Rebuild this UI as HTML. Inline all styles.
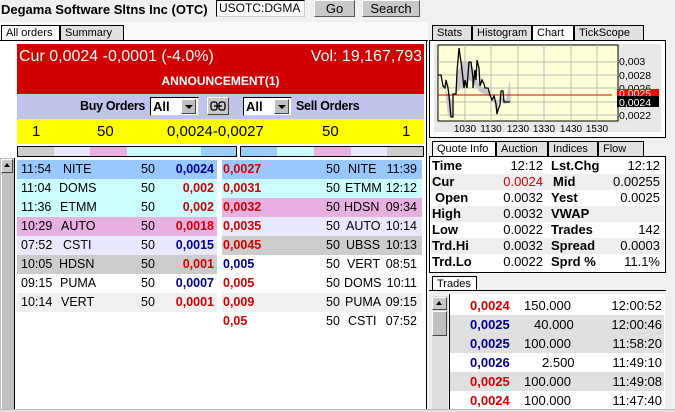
<!DOCTYPE html>
<html><head><meta charset="utf-8"><style>
*{margin:0;padding:0;box-sizing:border-box}
body{width:675px;height:412px;overflow:hidden;background:#f0f0f0;font-family:"Liberation Sans",sans-serif;font-size:12px;position:relative;color:#000}
.a{position:absolute}
.b{font-weight:bold}
.tab{position:absolute;height:15px;border:1px solid #000;border-bottom:none;background:#e0e0e0;font-size:11px;padding-left:4px;line-height:14px;white-space:nowrap;overflow:hidden}
.btn{position:absolute;background:#c8c8c8;border:1px solid #fff;border-right-color:#555;border-bottom-color:#555;text-align:center;font-size:13px;line-height:15px}
.row{position:absolute;height:19px;line-height:19px;font-size:12.5px}
.row span{position:absolute}
.bl{color:#000090;font-weight:bold}
.rd{color:#d00000;font-weight:bold}
.q{position:absolute;left:431px;width:233px;height:16px;line-height:16px;font-size:13px}
.q span{position:absolute}
.t{position:absolute;left:450px;width:214px;height:19px;line-height:19px;font-size:13px}
.t span{position:absolute}
</style></head><body>
<div class="a" style="left:0;top:22px;width:428px;height:390px;background:#fafafa"></div>
<div class="a b" style="left:1px;top:1px;font-size:13px;line-height:17px">Degama Software Sltns Inc (OTC)</div>
<div class="a" style="left:216px;top:0;width:89px;height:17px;background:#fff;border:1px solid #000;border-right-color:#ccc;border-bottom-color:#ccc;font-size:12px;line-height:15px;padding-left:2px">USOTC:DGMA</div>
<div class="btn" style="left:314px;top:0;width:41px;height:17px">Go</div>
<div class="btn" style="left:362px;top:0;width:58px;height:17px">Search</div>

<div class="tab" style="left:1px;top:25px;width:59px;background:#fff">All orders</div>
<div class="tab" style="left:60px;top:25px;width:64px">Summary</div>
<div class="a" style="left:0;top:40px;width:428px;height:1px;background:#000"></div>
<div class="a" style="left:426px;top:40px;width:1px;height:372px;background:#000"></div>
<div class="a" style="left:0;top:41px;width:426px;height:370px;background:#fff"></div>
<div class="a" style="left:14px;top:158px;width:1px;height:254px;background:#000"></div>
<div class="a" style="left:0;top:158px;width:14px;height:254px;background:#c0c0c0"></div>
<div class="a" style="left:1px;top:159px;width:12px;height:14px;background:#c8c8c8;border:1px solid #fff;border-right-color:#444;border-bottom-color:#444"></div>
<div class="a" style="left:4px;top:163px;width:0;height:0;border-left:3px solid transparent;border-right:3px solid transparent;border-bottom:4px solid #000"></div>
<div class="a" style="left:1px;top:175px;width:12px;height:236px;background:#c0c0c0;border-left:1px solid #fff"></div>

<div class="a" style="left:17px;top:44px;width:407px;height:50px;background:#d00000;color:#fff"></div>
<div class="a" style="left:19px;top:46px;color:#fff;font-size:16px;line-height:22px">Cur 0,0024 -0,0001 (-4.0%)</div>
<div class="a" style="left:300px;top:46px;width:122px;text-align:right;color:#fff;font-size:16px;line-height:22px">Vol: 19,167,793</div>
<div class="a b" style="left:17px;top:73px;width:407px;text-align:center;color:#fff;font-size:12px;line-height:16px">ANNOUNCEMENT(1)</div>
<div class="a" style="left:17px;top:94px;width:407px;height:25px;background:#c0c4ec"></div>
<div class="a b" style="left:80px;top:98px;font-size:12.5px;line-height:17px;letter-spacing:-0.3px">Buy Orders</div>
<div class="a b" style="left:150px;top:97px;width:49px;height:19px;background:#fff;border:1px solid #000;border-right-color:#ccc;border-bottom-color:#ccc;font-size:13px;line-height:17px;padding-left:2px">All</div>
<div class="a" style="left:181px;top:99px;width:15px;height:15px;background:#c0c0c0;border:1px solid #fff;border-right-color:#444;border-bottom-color:#444"></div>
<div class="a" style="left:185px;top:105px;border-left:4px solid transparent;border-right:4px solid transparent;border-top:4px solid #000"></div>
<div class="a" style="left:207px;top:97px;width:22px;height:18px;background:#c8c8c8;border:1px solid #fff;border-right-color:#444;border-bottom-color:#444"></div>
<svg class="a" style="left:210px;top:101px" width="16" height="10" viewBox="0 0 16 10"><rect x="1" y="1" width="6" height="8" rx="2" fill="none" stroke="#000" stroke-width="1.3"/><rect x="9" y="1" width="6" height="8" rx="2" fill="none" stroke="#000" stroke-width="1.3"/><line x1="4" y1="5" x2="12" y2="5" stroke="#000" stroke-width="1.3"/></svg>
<div class="a b" style="left:243px;top:97px;width:49px;height:19px;background:#fff;border:1px solid #000;border-right-color:#ccc;border-bottom-color:#ccc;font-size:13px;line-height:17px;padding-left:2px">All</div>
<div class="a" style="left:274px;top:99px;width:15px;height:15px;background:#c0c0c0;border:1px solid #fff;border-right-color:#444;border-bottom-color:#444"></div>
<div class="a" style="left:278px;top:105px;border-left:4px solid transparent;border-right:4px solid transparent;border-top:4px solid #000"></div>
<div class="a b" style="left:296px;top:98px;font-size:12.5px;line-height:17px;letter-spacing:-0.3px">Sell Orders</div>
<div class="a" style="left:17px;top:119px;width:407px;height:25px;background:#ffff00;font-size:15px;line-height:25px">
<span class="a" style="left:15px">1</span><span class="a" style="left:80px">50</span><span class="a" style="left:150px">0,0024-0,0027</span><span class="a" style="left:305px">50</span><span class="a" style="left:385px">1</span></div>
<div class="a" style="left:17px;top:146px;width:220px;height:11px;border:1px solid #000;background:linear-gradient(90deg,#ccc 0 36px,#e8e8ff 36px 72px,#e8b0e0 72px 109px,#ccffff 109px 183px,#99ccff 183px)"></div>
<div class="a" style="left:240px;top:146px;width:184px;height:11px;border:1px solid #000;background:linear-gradient(90deg,#99ccff 0 36px,#ccffff 36px 73px,#e8b0e0 73px 110px,#e8e8ff 110px 146px,#ccc 146px)"></div>

<div class="row" style="left:17px;top:160px;width:200px;background:#99c8ff"><span style="left:4px">11:54</span><span style="left:46px">NITE</span><span style="left:124px">50</span><span class="bl" style="right:3px">0,0024</span></div>
<div class="row" style="left:17px;top:179px;width:200px;background:#ccffff"><span style="left:4px">11:04</span><span style="left:42px">DOMS</span><span style="left:124px">50</span><span class="rd" style="right:3px">0,002</span></div>
<div class="row" style="left:17px;top:198px;width:200px;background:#ccffff"><span style="left:4px">11:36</span><span style="left:43px">ETMM</span><span style="left:124px">50</span><span class="rd" style="right:3px">0,002</span></div>
<div class="row" style="left:17px;top:217px;width:200px;background:#e8b0e0"><span style="left:4px">10:29</span><span style="left:44px">AUTO</span><span style="left:124px">50</span><span class="rd" style="right:3px">0,0018</span></div>
<div class="row" style="left:17px;top:236px;width:200px;background:#e8e8ff"><span style="left:4px">07:52</span><span style="left:46px">CSTI</span><span style="left:124px">50</span><span class="bl" style="right:3px">0,0015</span></div>
<div class="row" style="left:17px;top:255px;width:200px;background:#cccccc"><span style="left:4px">10:05</span><span style="left:42px">HDSN</span><span style="left:124px">50</span><span class="rd" style="right:3px">0,001</span></div>
<div class="row" style="left:17px;top:274px;width:200px;background:#fff"><span style="left:4px">09:15</span><span style="left:43px">PUMA</span><span style="left:124px">50</span><span class="bl" style="right:3px">0,0007</span></div>
<div class="row" style="left:17px;top:293px;width:200px;background:#f0f0f0"><span style="left:4px">10:14</span><span style="left:44px">VERT</span><span style="left:124px">50</span><span class="rd" style="right:3px">0,0001</span></div>

<div class="row" style="left:222px;top:160px;width:200px;background:#99c8ff"><span class="rd" style="left:1px">0,0027</span><span style="left:104px">50</span><span style="left:126px">NITE</span><span style="right:5px">11:39</span></div>
<div class="row" style="left:222px;top:179px;width:200px;background:#ccffff"><span class="rd" style="left:1px">0,0031</span><span style="left:104px">50</span><span style="left:123px">ETMM</span><span style="right:5px">12:12</span></div>
<div class="row" style="left:222px;top:198px;width:200px;background:#e8b0e0"><span class="rd" style="left:1px">0,0032</span><span style="left:104px">50</span><span style="left:122px">HDSN</span><span style="right:5px">09:34</span></div>
<div class="row" style="left:222px;top:217px;width:200px;background:#e8e8ff"><span class="rd" style="left:1px">0,0035</span><span style="left:104px">50</span><span style="left:124px">AUTO</span><span style="right:5px">10:14</span></div>
<div class="row" style="left:222px;top:236px;width:200px;background:#cccccc"><span class="rd" style="left:1px">0,0045</span><span style="left:104px">50</span><span style="left:124px">UBSS</span><span style="right:5px">10:13</span></div>
<div class="row" style="left:222px;top:255px;width:200px;background:#fff"><span class="bl" style="left:1px">0,005</span><span style="left:104px">50</span><span style="left:125px">VERT</span><span style="right:5px">08:51</span></div>
<div class="row" style="left:222px;top:274px;width:200px;background:#fff"><span class="rd" style="left:1px">0,005</span><span style="left:104px">50</span><span style="left:122px">DOMS</span><span style="right:5px">10:11</span></div>
<div class="row" style="left:222px;top:293px;width:200px;background:#f0f0f0"><span class="rd" style="left:1px">0,009</span><span style="left:104px">50</span><span style="left:123px">PUMA</span><span style="right:5px">09:15</span></div>
<div class="row" style="left:222px;top:312px;width:200px;background:#fff"><span class="rd" style="left:1px">0,05</span><span style="left:104px">50</span><span style="left:126px">CSTI</span><span style="right:5px">07:52</span></div>

<!-- right panel -->
<div class="tab" style="left:432px;top:25px;width:40px">Stats</div>
<div class="tab" style="left:472px;top:25px;width:60px">Histogram</div>
<div class="tab" style="left:532px;top:25px;width:42px;background:#fff">Chart</div>
<div class="tab" style="left:574px;top:25px;width:70px">TickScope</div>
<div class="a" style="left:429px;top:40px;width:237px;height:98px;border:1px solid #000;background:#fff"></div>
<div class="a" style="left:434px;top:44px;width:227px;height:88px;background:#e8e8e8"></div>
<svg class="a" style="left:0;top:0" width="675" height="140" viewBox="0 0 675 140">
<rect x="438" y="45" width="180" height="76" fill="#ffffd8" stroke="#000" stroke-width="1"/>
<g stroke="#bbb" stroke-width="1">
<line x1="465" y1="45" x2="465" y2="121"/><line x1="491" y1="45" x2="491" y2="121"/><line x1="518" y1="45" x2="518" y2="121"/><line x1="544" y1="45" x2="544" y2="121"/><line x1="571" y1="45" x2="571" y2="121"/><line x1="597" y1="45" x2="597" y2="121"/>
<line x1="438" y1="62" x2="618" y2="62"/><line x1="438" y1="75" x2="618" y2="75"/><line x1="438" y1="88" x2="618" y2="88"/><line x1="438" y1="102" x2="618" y2="102"/><line x1="438" y1="115" x2="618" y2="115"/>
</g>
<path d="M457 72 L464 60 L470 62 L474 70 L480 86 L488 90 L494 102 L497 116 L499 96 L506 100 L510 80 L511 102 L504 104 L498 100 L492 98 L480 92 L470 80 L462 88 L456 92 Z M445 90 L452 100 L452 118 L448 116 Z" fill="#c8c8c8"/>
<line x1="438" y1="95" x2="612" y2="95" stroke="#d00" stroke-width="1"/>
<polyline fill="none" stroke="#000" stroke-width="1.3" points="438,75 441,75 443,86 445,88 446,80 448,88 449,96 451,117 453,117 453,94 456,94 457,72 458,60 459,48 461,62 462,70 464,88 465,80 467,88 469,62 471,62 473,78 473,88 475,70 476,80 477,60 479,68 480,86 482,80 484,84 485,88 488,88 490,95 492,100 494,96 496,104 497,114 498,110 500,105 501,91 503,91 504,102 510,102"/>
<g font-family="Liberation Sans" font-size="10.5" fill="#000">
<text x="619" y="65">0,003</text><text x="619" y="79">0,0028</text><text x="619" y="92">0,0026</text><text x="619" y="119">0,0022</text>
</g>
<g font-family="Liberation Sans" font-size="10" fill="#000" text-anchor="middle">
<text x="465" y="132">1030</text><text x="491" y="132">1130</text><text x="518" y="132">1230</text><text x="544" y="132">1330</text><text x="571" y="132">1430</text><text x="597" y="132">1530</text>
</g>
<rect x="617" y="89" width="42" height="8" fill="#ff0000"/>
<text x="619" y="97" font-family="Liberation Sans" font-size="10.5" fill="#fff">0,0025</text>
<rect x="617" y="96" width="42" height="11" fill="#000"/>
<text x="619" y="106" font-family="Liberation Sans" font-size="10.5" fill="#fff">0,0024</text>
</svg>

<div class="tab" style="left:432px;top:141px;width:64px;background:#fff">Quote Info</div>
<div class="tab" style="left:496px;top:141px;width:52px">Auction</div>
<div class="tab" style="left:548px;top:141px;width:50px">Indices</div>
<div class="tab" style="left:598px;top:141px;width:46px">Flow</div>
<div class="a" style="left:429px;top:156px;width:237px;height:117px;border:1px solid #000;background:#fff"></div>
<div class="q" style="top:158px"><span class="b" style="left:1px">Time</span><span style="right:121px">12:12</span><span class="b" style="left:120px">Lst.Chg</span><span style="right:4px">12:12</span></div>
<div class="q" style="top:174px;background:#eee"><span class="b" style="left:1px">Cur</span><span class="rd" style="right:121px;font-weight:normal">0.0024</span><span class="b" style="left:122px">Mid</span><span style="right:4px">0.00255</span></div>
<div class="q" style="top:190px"><span class="b" style="left:4px">Open</span><span style="right:121px">0.0032</span><span class="b" style="left:120px">Yest</span><span style="right:4px">0.0025</span></div>
<div class="q" style="top:206px;background:#eee"><span class="b" style="left:1px">High</span><span style="right:121px">0.0032</span><span class="b" style="left:120px">VWAP</span></div>
<div class="q" style="top:222px"><span class="b" style="left:1px">Low</span><span style="right:121px">0.0022</span><span class="b" style="left:120px">Trades</span><span style="right:4px">142</span></div>
<div class="q" style="top:238px;background:#eee"><span class="b" style="left:1px">Trd.Hi</span><span style="right:121px">0.0032</span><span class="b" style="left:120px">Spread</span><span style="right:4px">0.0003</span></div>
<div class="q" style="top:254px"><span class="b" style="left:1px">Trd.Lo</span><span style="right:121px">0.0022</span><span class="b" style="left:120px">Sprd %</span><span style="right:4px">11.1%</span></div>

<div class="tab" style="left:432px;top:276px;width:45px;background:#fff">Trades</div>
<div class="a" style="left:429px;top:290px;width:237px;height:1px;background:#000"></div>
<div class="a" style="left:432px;top:296px;width:16px;height:116px;background:#ddd"></div>
<div class="a" style="left:432px;top:297px;width:15px;height:13px;background:#c8c8c8;border:1px solid #fff;border-right-color:#444;border-bottom-color:#444"></div>
<div class="a" style="left:436px;top:301px;border-left:3px solid transparent;border-right:3px solid transparent;border-bottom:4px solid #000"></div>
<div class="a" style="left:432px;top:311px;width:15px;height:25px;background:#c0c0c0;border:1px solid #fff;border-right-color:#444;border-bottom-color:#444"></div>
<div class="a" style="left:449px;top:294px;width:1px;height:118px;background:#000"></div>
<div class="a" style="left:450px;top:294px;width:215px;height:118px;background:#fff"></div>
<div class="t" style="top:296px"><span class="rd" style="left:20px">0,0024</span><span style="left:74px">150.000</span><span style="right:2px">12:00:52</span></div>
<div class="t" style="top:315px;background:#e0e0e0"><span class="bl" style="left:20px">0,0025</span><span style="left:84px">40.000</span><span style="right:2px">12:00:46</span></div>
<div class="t" style="top:334px;background:#e0e0e0"><span class="bl" style="left:20px">0,0025</span><span style="left:74px">100.000</span><span style="right:2px">11:58:20</span></div>
<div class="t" style="top:353px"><span class="bl" style="left:20px">0,0026</span><span style="left:92px">2.500</span><span style="right:2px">11:49:10</span></div>
<div class="t" style="top:372px;background:#e0e0e0"><span class="rd" style="left:20px">0,0025</span><span style="left:74px">100.000</span><span style="right:2px">11:49:08</span></div>
<div class="t" style="top:391px"><span class="rd" style="left:20px">0,0024</span><span style="left:74px">100.000</span><span style="right:2px">11:47:40</span></div>
<div class="a" style="left:0;top:409px;width:675px;height:3px;background:#e0e0e0;border-top:1px solid #bbb"></div>
</body></html>
